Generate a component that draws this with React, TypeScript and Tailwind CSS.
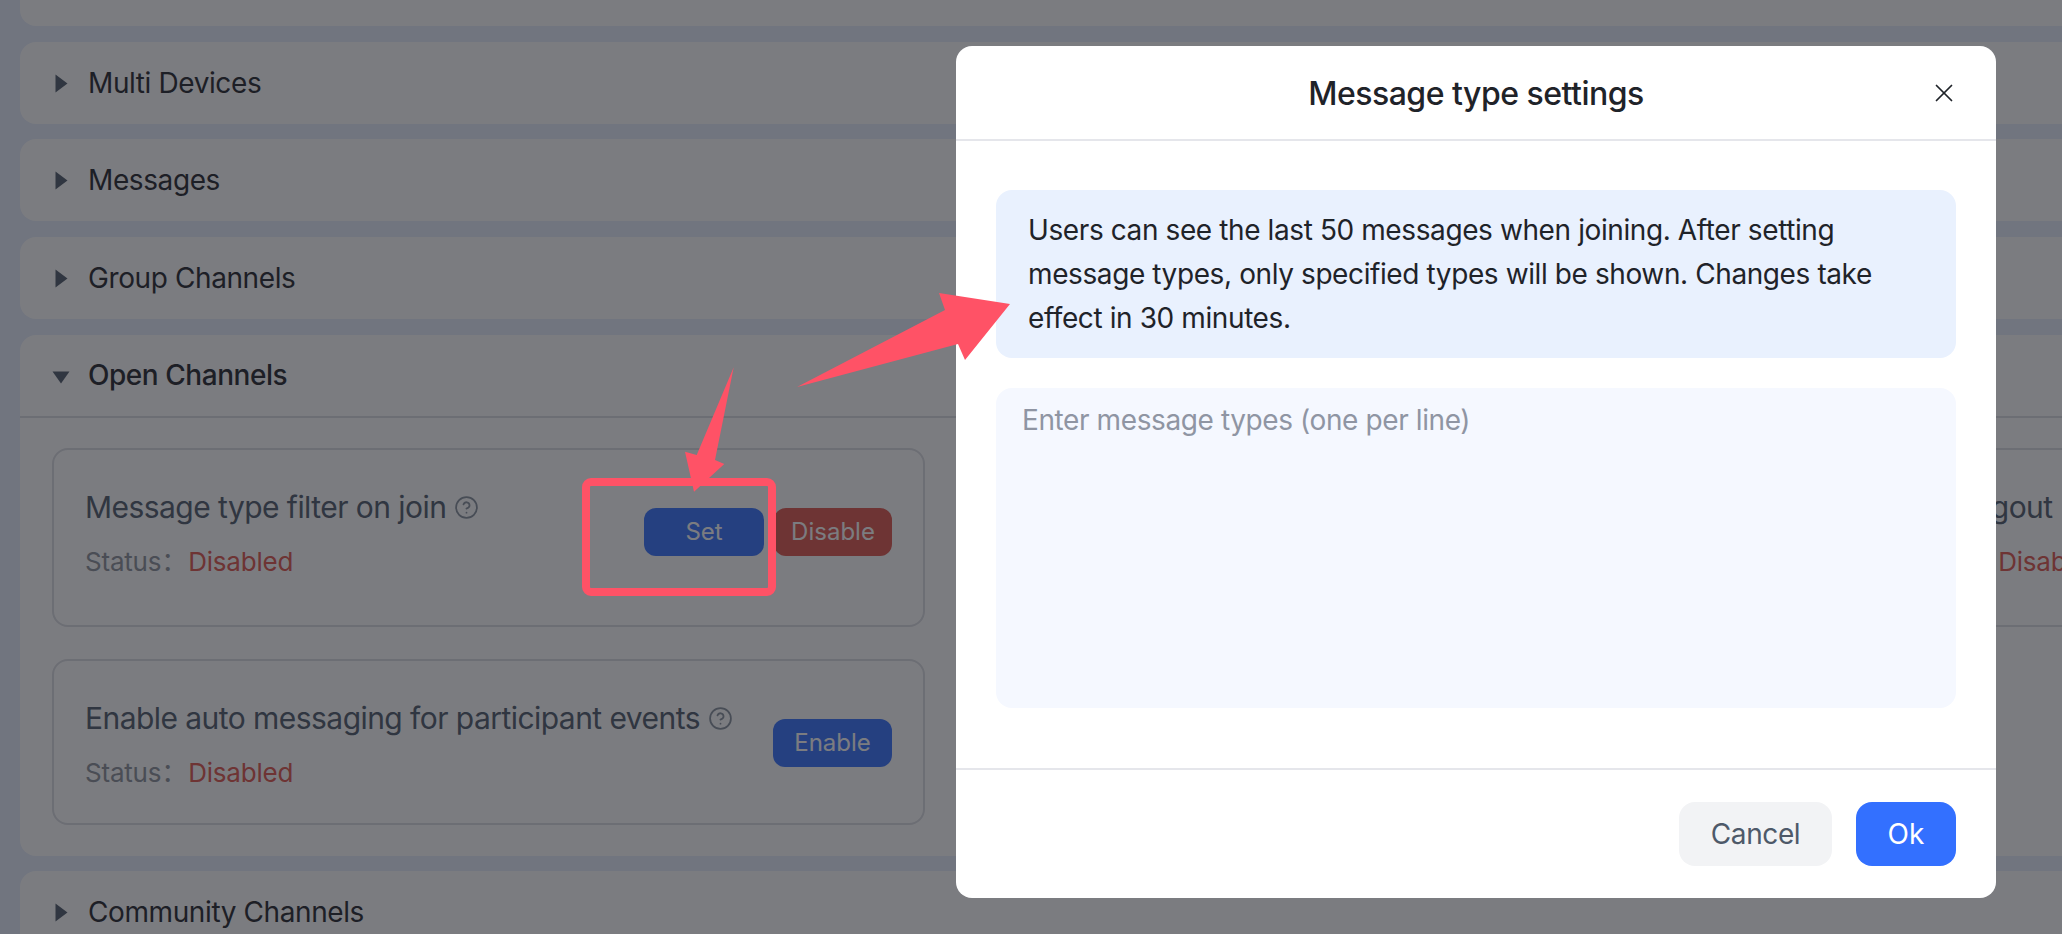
import { CircleHelp, X } from "lucide-react";

const font = { fontFamily: 'Inter, "Noto Sans CJK SC", sans-serif' };

function Caret({ open }: { open?: boolean }) {
  return open ? (
    <svg width="18" height="13" viewBox="0 0 18 13" className="absolute left-[32px] top-[36px]">
      <polygon points="0.5,0.5 17.5,0.5 9,12.5" fill="#4e5969" />
    </svg>
  ) : (
    <svg width="13" height="19" viewBox="0 0 13 19" className="absolute left-[35px] top-[32px]">
      <polygon points="0.5,0.5 12.5,9.5 0.5,18.5" fill="#4e5969" />
    </svg>
  );
}

function Panel({ title }: { title: string }) {
  return (
    <section className="relative flex h-[82px] items-center rounded-2xl bg-white pl-[68px] text-[28px] leading-[44px] tracking-[-0.4px] text-[#1f2329]">
      <Caret />
      {title}
    </section>
  );
}

function Btn({ children, red, w }: { children: string; red?: boolean; w: string }) {
  return (
    <button
      className={
        "flex h-12 items-center justify-center rounded-xl text-[24px] text-white " +
        (red ? "bg-[#e0534a] " : "bg-[#3370ff] ") +
        w
      }
    >
      {children}
    </button>
  );
}

function Card({ title, children }: { title: string; children: React.ReactNode }) {
  return (
    <div className="flex items-start justify-between rounded-2xl border-2 border-[#dcdde2] pb-8 pl-[31px] pr-[31px] pt-9">
      <div>
        <div className="flex h-11 items-center gap-2 whitespace-nowrap text-[30px] tracking-[-0.55px] text-[#4e5969]">
          {title}
          <CircleHelp size={25} strokeWidth={1.7} className="text-[#86909c]" />
        </div>
        <div className="mt-[14px] h-9 whitespace-nowrap text-[26px] leading-9 tracking-[-0.2px] text-[#8a8f99]">
          Status：<span className="ml-px text-[#e0534a]">Disabled</span>
        </div>
      </div>
      <div className="mt-[22px] flex gap-[10px]">{children}</div>
    </div>
  );
}

export default function App() {
  return (
    <div className="relative h-screen w-[2062px] overflow-hidden bg-[#e7eefc]" style={font}>
      <main className="flex w-[2800px] flex-col gap-[15.67px] pl-5">
        <div className="h-[26px] rounded-b-2xl bg-white" />
        <Panel title="Multi Devices" />
        <Panel title="Messages" />
        <Panel title="Group Channels" />
        <section className="rounded-2xl bg-white">
          <div className="relative flex h-[83px] items-center border-b-2 border-[#dcdde2] pl-[68px] text-[28px] font-medium leading-[44px] tracking-[-0.45px] text-[#1f2329]">
            <Caret open />
            Open Channels
          </div>
          <div className="grid grid-cols-[873px_873px_873px] grid-rows-[179px_166px] gap-8 pb-[31px] pl-8 pt-[30px]">
            <Card title="Message type filter on join">
              <Btn w="w-[120px]">Set</Btn>
              <Btn w="w-[118px]" red>Disable</Btn>
            </Card>
            <Card title="Message history on join">
              <Btn w="w-[119px]">Enable</Btn>
            </Card>
            <Card title="Auto logout">
              <Btn w="w-[119px]">Enable</Btn>
            </Card>
            <Card title="Enable auto messaging for participant events">
              <Btn w="w-[119px]">Enable</Btn>
            </Card>
          </div>
        </section>
        <Panel title="Community Channels" />
      </main>

      <div className="absolute inset-0 bg-[rgba(28,30,36,0.58)]" />

      <div className="absolute left-[956px] top-[46px] flex h-[852px] w-[1040px] flex-col rounded-2xl bg-white">
        <div className="relative flex h-[95px] shrink-0 items-center justify-center border-b-2 border-[#e5e6eb] pt-[2px] text-[32px] font-medium tracking-[-0.5px] text-[#1f2329]">
          Message type settings
          <X size={30} strokeWidth={1.4} className="absolute right-[37px] top-[32px] text-[#1f2329]" />
        </div>
        <div className="flex flex-1 flex-col gap-[30px] px-10 pt-[49px]">
          <div className="h-[168px] rounded-2xl bg-[#e9f1fe] py-[18px] pl-8 pr-[33px] text-[28px] leading-[44px] tracking-[-0.4px] text-[#1f2329]">
            Users can see the last 50 messages when joining. After setting message types, only specified types will be shown. Changes take effect in 30 minutes.
          </div>
          <textarea
            className="h-[320px] w-full resize-none rounded-2xl bg-[#f5f8ff] px-[26px] py-[10px] text-[28px] leading-[44px] tracking-[-0.4px] outline-none placeholder:text-[#8f95a3]"
            placeholder="Enter message types (one per line)"
          />
        </div>
        <div className="flex h-[130px] shrink-0 justify-end gap-6 border-t-2 border-[#e5e6eb] px-10 pt-[32px]">
          <button className="h-16 w-[153px] rounded-2xl bg-[#f2f3f5] text-[28px] tracking-[-0.4px] text-[#4e5969]">Cancel</button>
          <button className="h-16 w-[100px] rounded-2xl bg-[#3370ff] text-[28px] text-white">Ok</button>
        </div>
      </div>

      <svg className="pointer-events-none absolute inset-0" width="2062" height="934" viewBox="0 0 2062 934">
        <rect x="586" y="482" width="186" height="110" rx="5" fill="none" stroke="#ff5266" strokeWidth="8" />
        <polygon points="733.7,367.3 715,460 724.3,464 694,491.7 685,451.7 696.7,455" fill="#ff5266" />
        <polygon points="1010,304 939,293 945,310 797,387 958,344 965,360" fill="#ff5266" />
      </svg>
    </div>
  );
}
